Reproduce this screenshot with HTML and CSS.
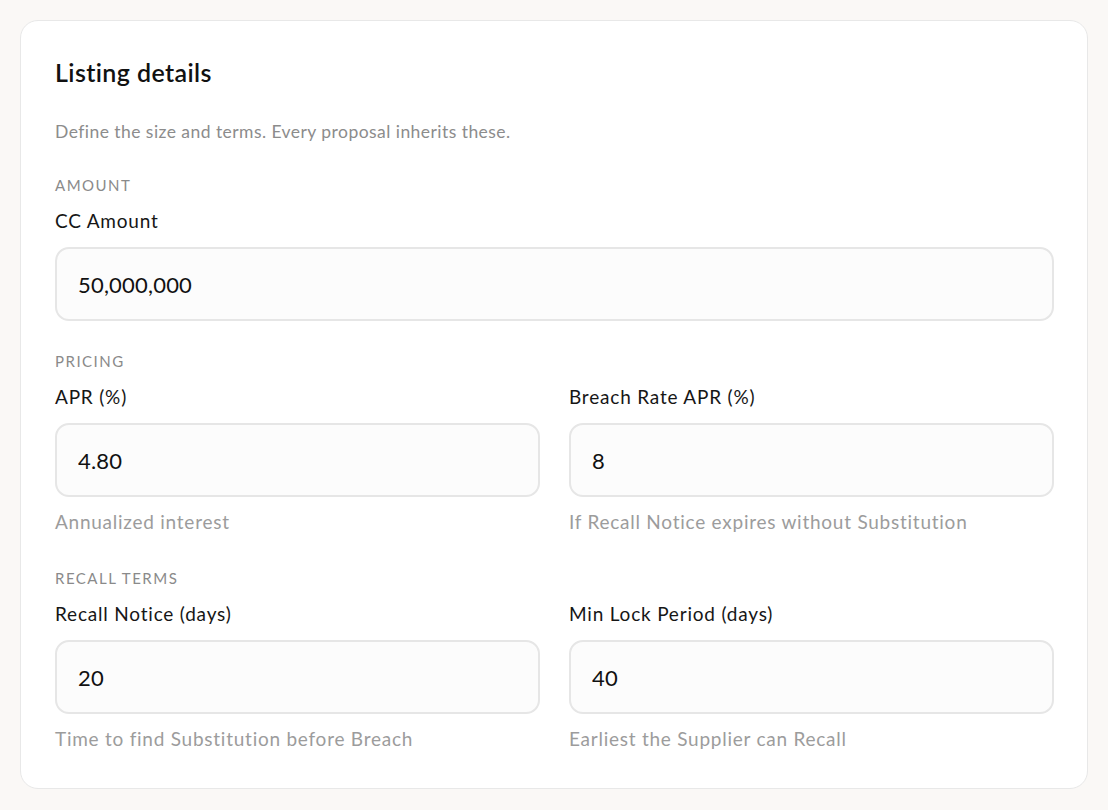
FILE: index.html
```html
<!DOCTYPE html>
<html lang="en">
<head>
  <meta charset="UTF-8">
  <meta name="viewport" content="width=device-width, initial-scale=1.0">
  <title>Listing details</title>
  <link rel="stylesheet" href="styles.css">
</head>
<body>
  <div class="card">
    <h1 class="card-title">Listing details</h1>
    <p class="card-subtitle">Define the size and terms. Every proposal inherits these.</p>

    <section class="group group-first">
      <p class="group-label">Amount</p>
      <div class="field">
        <label class="field-label" for="ccAmount">CC Amount</label>
        <input id="ccAmount" class="field-input" type="text" value="50,000,000">
      </div>
    </section>

    <section class="group">
      <p class="group-label">Pricing</p>
      <div class="field-row">
        <div class="field">
          <label class="field-label" for="apr">APR (%)</label>
          <input id="apr" class="field-input" type="text" value="4.80">
          <p class="field-help">Annualized interest</p>
        </div>
        <div class="field">
          <label class="field-label" for="breachApr">Breach Rate APR (%)</label>
          <input id="breachApr" class="field-input" type="text" value="8">
          <p class="field-help">If Recall Notice expires without Substitution</p>
        </div>
      </div>
    </section>

    <section class="group group-after-help">
      <p class="group-label">Recall terms</p>
      <div class="field-row">
        <div class="field">
          <label class="field-label" for="recallNotice">Recall Notice (days)</label>
          <input id="recallNotice" class="field-input" type="text" value="20">
          <p class="field-help">Time to find Substitution before Breach</p>
        </div>
        <div class="field">
          <label class="field-label" for="minLock">Min Lock Period (days)</label>
          <input id="minLock" class="field-input" type="text" value="40">
          <p class="field-help">Earliest the Supplier can Recall</p>
        </div>
      </div>
    </section>
  </div>
</body>
</html>
```

FILE: styles.css
```css
* {
  box-sizing: border-box;
  margin: 0;
  padding: 0;
}

body {
  background-color: #faf8f6;
  padding: 20px;
  font-family: Lato, "Open Sans", sans-serif;
  color: #141414;
}

.card {
  background-color: #fff;
  border: 1px solid #e8e8e8;
  border-radius: 18px;
  padding: 36px 33px 37px 34px;
}

.card-title {
  font-size: 25px;
  line-height: 30px;
  font-weight: 600;
  letter-spacing: 0.4px;
  color: #111;
}

.card-subtitle {
  margin-top: 33px;
  font-size: 17.5px;
  line-height: 24px;
  letter-spacing: 0.45px;
  color: #8c8c8c;
}

.group {
  margin-top: 30px;
}

.group-first {
  margin-top: 31px;
}

.group-after-help {
  margin-top: 34px;
}

.group-label {
  font-size: 15px;
  line-height: 20px;
  letter-spacing: 0.1em;
  text-transform: uppercase;
  color: #8a8a8a;
  margin-bottom: 14px;
}

.field-row {
  display: grid;
  grid-template-columns: 1fr 1fr;
  column-gap: 29px;
}

.field {
  display: flex;
  flex-direction: column;
}

.field-label {
  font-size: 19px;
  line-height: 24px;
  letter-spacing: 0.8px;
  color: #161616;
}

.field-input {
  margin-top: 14px;
  height: 74px;
  width: 100%;
  padding: 0 21px;
  border: 2px solid #e6e6e6;
  border-radius: 14px;
  background-color: #fcfcfc;
  font-family: inherit;
  font-size: 22px;
  letter-spacing: 0.2px;
  color: #111;
}

.field-input:focus {
  outline: none;
  border-color: #cfcfcf;
}

.field-help {
  margin-top: 13px;
  font-size: 19px;
  line-height: 24px;
  letter-spacing: 0.75px;
  color: #9c9c9c;
}
```
